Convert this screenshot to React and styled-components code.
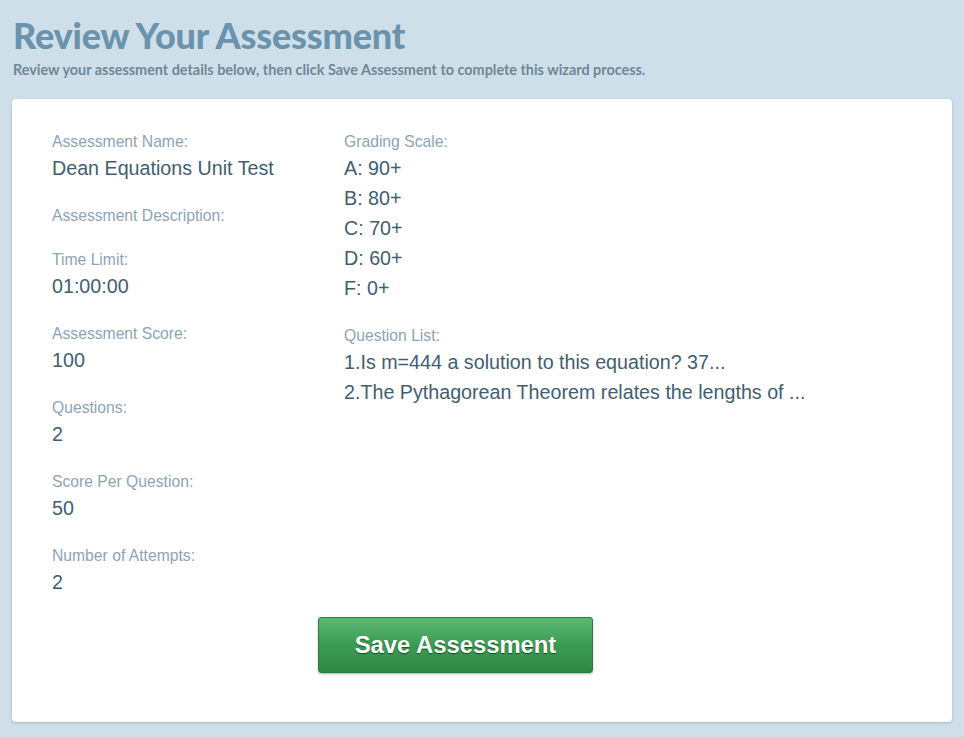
import React from 'react';
import styled, { createGlobalStyle } from 'styled-components';

const GlobalStyle = createGlobalStyle`
  html, body {
    margin: 0;
    padding: 0;
    background: #cfdfe9;
  }
  body {
    font-family: 'Liberation Sans', Arial, sans-serif;
  }
`;

const leftFields = [
  { label: 'Assessment Name:', value: 'Dean Equations Unit Test' },
  { label: 'Assessment Description:', value: '' },
  { label: 'Time Limit:', value: '01:00:00' },
  { label: 'Assessment Score:', value: '100' },
  { label: 'Questions:', value: '2' },
  { label: 'Score Per Question:', value: '50' },
  { label: 'Number of Attempts:', value: '2' },
];

const grades = ['A: 90+', 'B: 80+', 'C: 70+', 'D: 60+', 'F: 0+'];

const questions = [
  '1.Is m=444 a solution to this equation? 37...',
  '2.The Pythagorean Theorem relates the lengths of ...',
];

function App() {
  return (
    <Page>
      <GlobalStyle />
      <Header>
        <Title>Review Your Assessment</Title>
        <Subtitle>
          Review your assessment details below, then click Save Assessment to complete this wizard process.
        </Subtitle>
      </Header>
      <Card>
        <Columns>
          <Column>
            {leftFields.map(field => (
              <Field key={field.label}>
                <Label>{field.label}</Label>
                {field.value ? <Value>{field.value}</Value> : null}
              </Field>
            ))}
          </Column>
          <Column>
            <Field>
              <Label>Grading Scale:</Label>
              {grades.map(grade => (
                <Value key={grade}>{grade}</Value>
              ))}
            </Field>
            <Field>
              <Label>Question List:</Label>
              {questions.map(q => (
                <Value key={q}>{q}</Value>
              ))}
            </Field>
          </Column>
        </Columns>
        <Actions>
          <SaveButton type="button">Save Assessment</SaveButton>
        </Actions>
      </Card>
    </Page>
  );
}

const Page = styled.div`
  padding: 13px 12px 15px;
  min-height: 100vh;
  box-sizing: border-box;
`;

const Header = styled.div`
  padding-left: 1px;
  margin-bottom: 20px;
`;

const Title = styled.h1`
  margin: 0;
  font-family: Lato, 'Open Sans', sans-serif;
  font-weight: 900;
  font-size: 36px;
  line-height: 44px;
  color: #6b93ae;
  letter-spacing: -0.2px;
`;

const Subtitle = styled.p`
  margin: 4px 0 0;
  font-family: Lato, 'Open Sans', sans-serif;
  font-weight: 700;
  font-size: 14.4px;
  line-height: 18px;
  color: #6f8797;
`;

const Card = styled.div`
  background: #fff;
  border-radius: 4px;
  box-shadow: 0 1px 3px rgba(80, 110, 130, 0.35);
  padding: 33px 40px 49px;
`;

const Columns = styled.div`
  display: flex;
`;

const Column = styled.div`
  display: flex;
  flex-direction: column;
  &:first-child {
    width: 292px;
  }
`;

const Field = styled.div`
  display: flex;
  flex-direction: column;
  margin-bottom: 23px;
  min-height: 21px;
`;

const Label = styled.div`
  font-size: 15.7px;
  line-height: 20px;
  color: #8da4b6;
  margin-bottom: 1px;
`;

const Value = styled.div`
  font-size: 19.7px;
  line-height: 30px;
  color: #415e71;
`;

const Actions = styled.div`
  display: flex;
  padding-left: 266px;
  margin-top: -3px;
`;

const SaveButton = styled.button`
  width: 275px;
  height: 56px;
  border: 1px solid #2c7a3f;
  border-radius: 3px;
  background: linear-gradient(to bottom, #5cb974 0%, #3a9b52 50%, #2f8845 100%);
  box-shadow: 0 1px 2px rgba(0, 0, 0, 0.3);
  color: #fff;
  font-family: 'Liberation Sans', Arial, sans-serif;
  font-weight: 700;
  font-size: 23.8px;
  text-shadow: 0 1px 1px rgba(0, 50, 10, 0.7);
  cursor: pointer;
`;

export default App;
